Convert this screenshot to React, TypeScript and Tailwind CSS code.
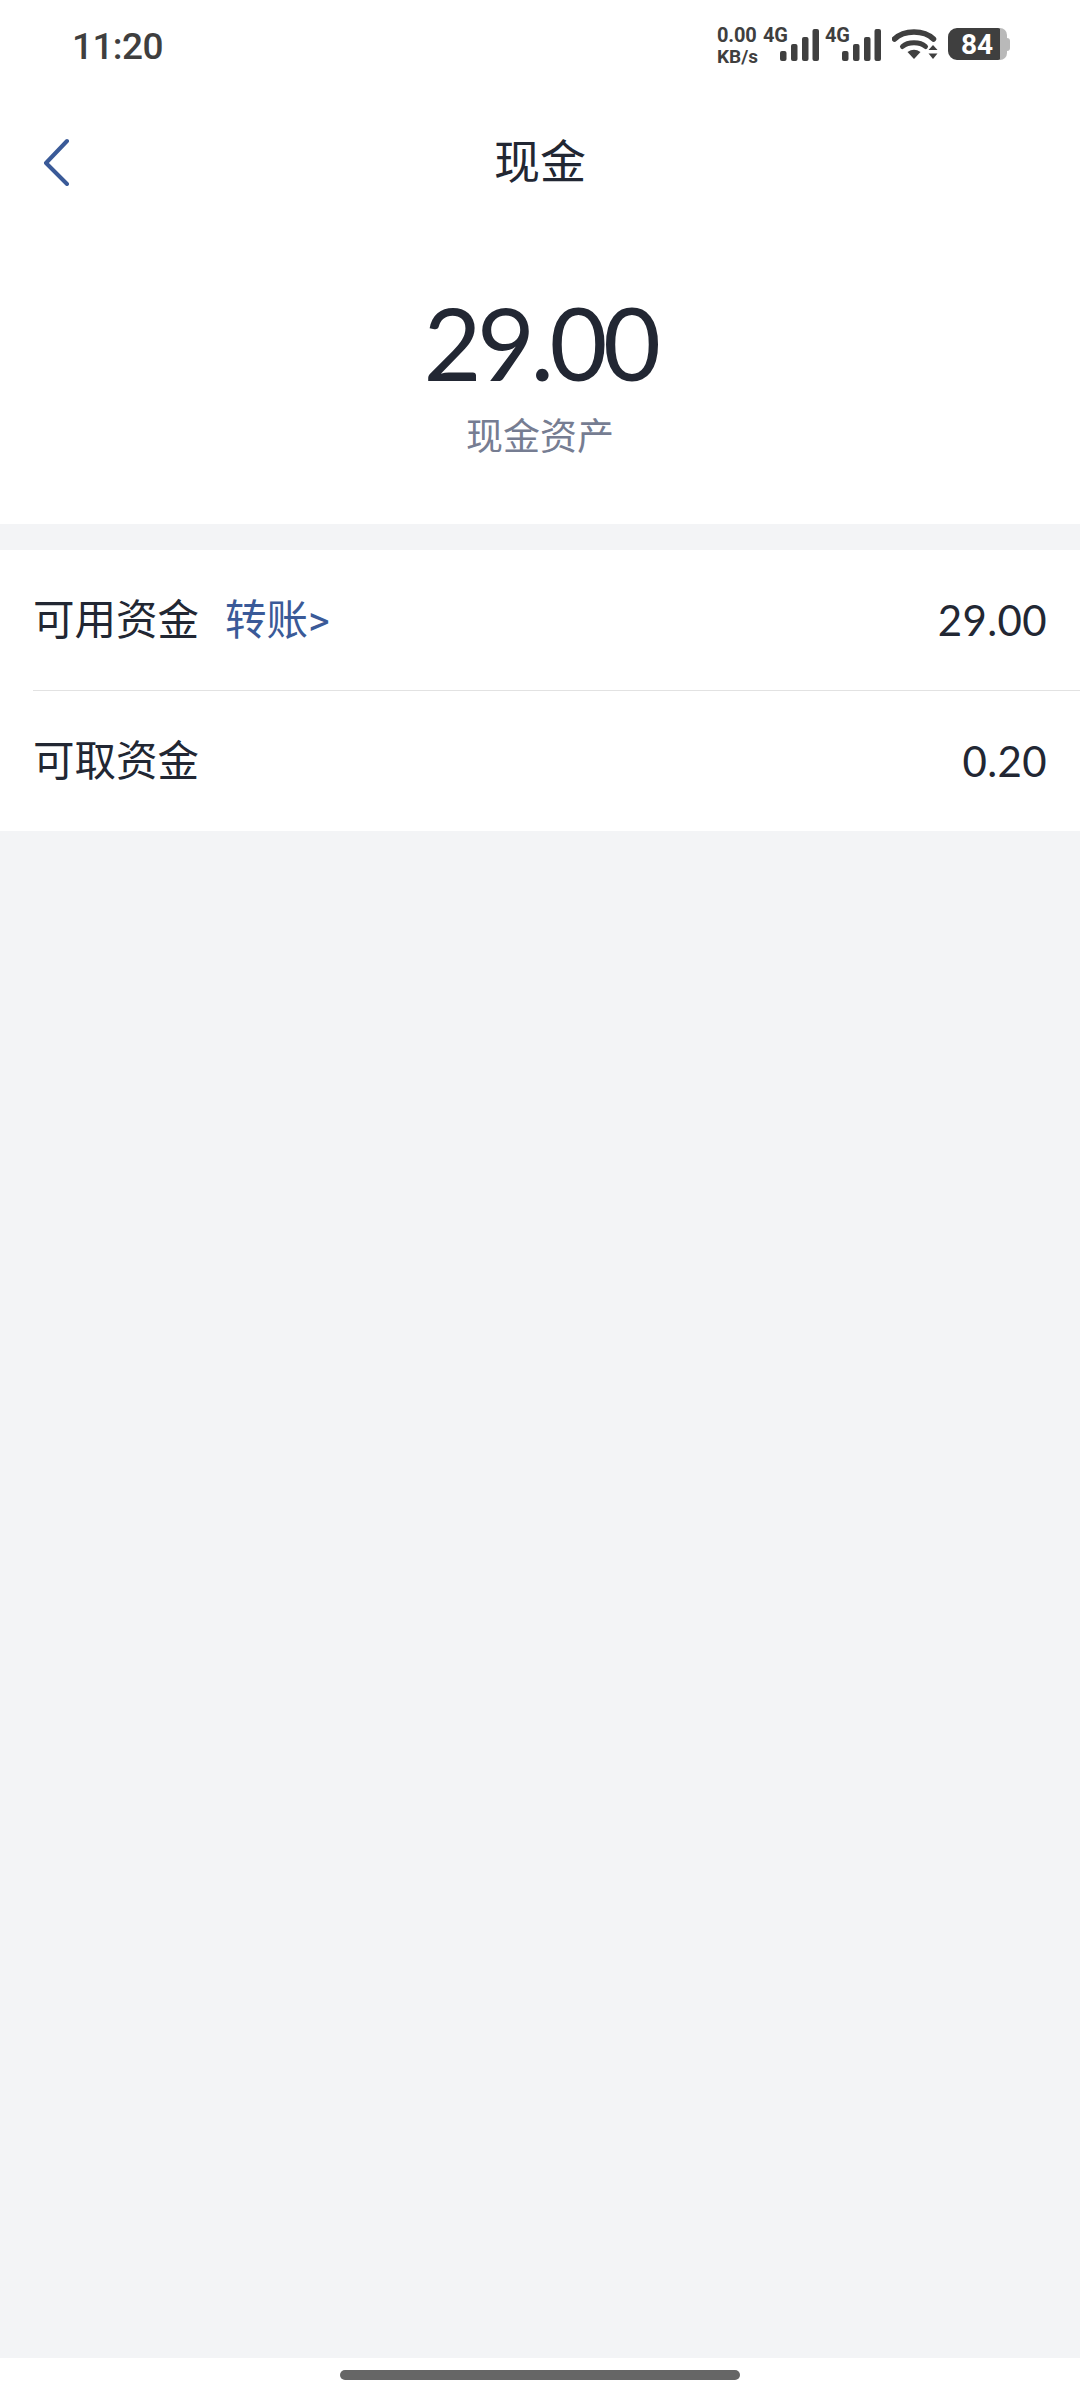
const cjk = "font-['Roboto','Noto_Sans_CJK_SC',sans-serif]";

function Signal() {
  return (
    <div className="relative w-[57px] h-[40px]">
      <span className="absolute left-0 top-[-3px] text-[20px] leading-[20px] font-bold tracking-[-0.3px] text-[#3f3f3f] font-['Roboto',sans-serif]">4G</span>
      <svg className="absolute left-0 top-0" width="57" height="40" viewBox="0 0 57 40">
        <rect x="17" y="23" width="6.5" height="10" rx="2" fill="#3f3f3f" />
        <rect x="28" y="16" width="6.5" height="17" rx="2" fill="#3f3f3f" />
        <rect x="39" y="9" width="6.5" height="24" rx="2" fill="#3f3f3f" />
        <rect x="49.5" y="1" width="6.5" height="32" rx="2" fill="#3f3f3f" />
      </svg>
    </div>
  );
}

function Wifi() {
  return (
    <svg width="46" height="34" viewBox="0 0 46 34" fill="none">
      <path d="M2.5 11 C12 1.5 32 1.5 41.5 11" stroke="#3f3f3f" strokeWidth="5.5" strokeLinecap="round" />
      <path d="M10.5 18.5 C16 13.5 28 13.5 33.5 18.5" stroke="#3f3f3f" strokeWidth="5" strokeLinecap="round" />
      <path d="M15.5 24 Q22 19.5 28.500 24 L22 31 Z" fill="#3f3f3f" />
      <path d="M41 17 L45.500 22 L36.500 22 Z" fill="#3f3f3f" />
      <path d="M36.500 25.500 L45.500 25.500 L41 31 Z" fill="#3f3f3f" />
    </svg>
  );
}

function Battery() {
  return (
    <div className="relative w-[62px] h-[32px] flex">
      <div className="w-[54px] h-[32px] rounded-l-[9px] rounded-r-[3px] bg-[#3f3f3f]" />
      <div className="w-[7px] h-[32px] rounded-r-[8px] bg-[#b9b9b9] ml-[-1px]" />
      <div className="w-[3px] h-[13px] mt-[10px] rounded-r-[3px] bg-[#b9b9b9]" />
      <span className="absolute left-[13px] top-[4px] text-[28px] leading-[26px] font-bold text-white font-['Roboto',sans-serif]">84</span>
    </div>
  );
}

function StatusBar() {
  return (
    <div className="h-[88px] flex items-start justify-between pl-[72px] pr-[70px]">
      <span className="mt-[27px] text-[37px] leading-[40px] font-medium text-[#3f3f3f] tracking-[-0.6px] font-['Roboto',sans-serif]">11:20</span>
      <div className="flex items-start mt-[28px]">
        <div className="w-[46px] flex flex-col items-start text-[#3f3f3f] font-bold text-[20px] leading-[22px] font-['Roboto',sans-serif] -mt-[4px]">
          <span className="whitespace-nowrap tracking-[-0.2px]">0.00</span>
          <span className="whitespace-nowrap text-[19px]">KB/s</span>
        </div>
        <Signal />
        <div className="w-[5px]" />
        <Signal />
        <div className="w-[10px]" />
        <Wifi />
        <div className="w-[10px]" />
        <Battery />
      </div>
    </div>
  );
}

function Row({ label, value, link }: { label: string; value: string; link?: string }) {
  return (
    <div className="h-[140px] flex items-center justify-between pr-[33px]">
      <div className={`flex items-center pt-[2px] text-[41.500px] leading-[50px] text-[#222733] ${cjk}`}>
        <span>{label}</span>
        {link && <span className="ml-[26px] text-[#3a5a98]">{link}</span>}
      </div>
      <span className="text-[42px] leading-[50px] text-[#222733] font-['Lato',sans-serif] tracking-[0.4px]">{value}</span>
    </div>
  );
}

export default function App() {
  return (
    <div className="w-[1080px] h-[2400px] bg-white flex flex-col overflow-hidden">
      <StatusBar />
      <div className="relative h-[148px] flex items-center justify-center">
        <svg className="absolute left-[42px] top-[50px]" width="30" height="48" viewBox="0 0 30 48" fill="none">
          <path d="M25 3 L4 25 L25 46" stroke="#3a5a98" strokeWidth="4" strokeLinecap="round" strokeLinejoin="round" />
        </svg>
        <span className={`text-[46px] leading-[60px] text-[#222733] ${cjk}`}>现金</span>
      </div>
      <div className="h-[288px] flex flex-col items-center">
        <span className="mt-[51px] text-[100px] leading-[110px] text-[#222733] tracking-[-4.500px] font-['Lato',sans-serif]">29.00</span>
        <span className={`mt-[19px] text-[37px] leading-[44px] text-[#767d92] ${cjk}`}>现金资产</span>
      </div>
      <div className="flex-1 bg-[#f3f4f6] pt-[26px]">
        <div className="bg-white pl-[33px] flex flex-col">
          <Row label="可用资金" value="29.00" link="转账>" />
          <div className="h-[1px] bg-[#e2e2e2]" />
          <Row label="可取资金" value="0.20" />
        </div>
      </div>
      <div className="h-[42px] flex justify-center pt-[12px]">
        <div className="w-[400px] h-[10px] rounded-full bg-[#666666]" />
      </div>
    </div>
  );
}
